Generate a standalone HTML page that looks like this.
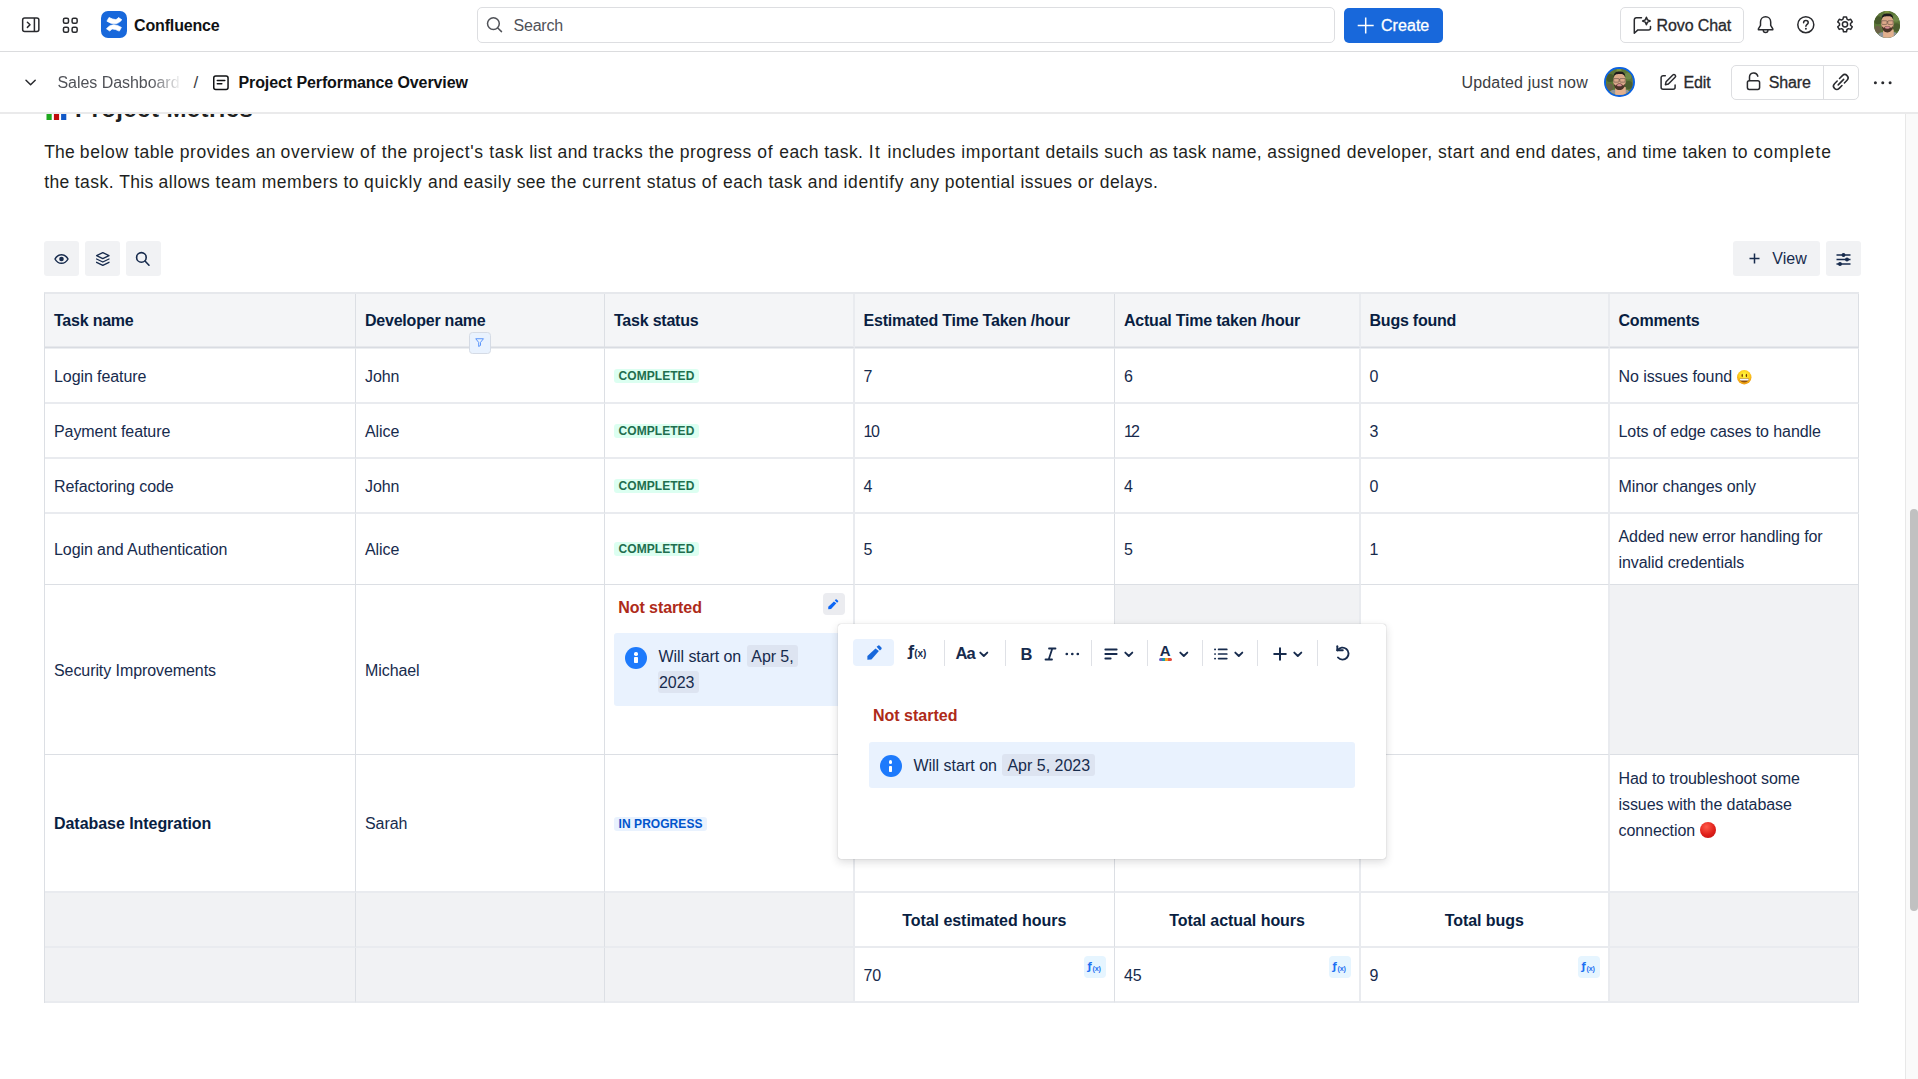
<!DOCTYPE html>
<html lang="en">
<head>
<meta charset="utf-8">
<title>Project Performance Overview - Confluence</title>
<style>
*{box-sizing:border-box;margin:0;padding:0}
html,body{width:1918px;height:1079px;overflow:hidden;background:#fff}
body{font-family:"Liberation Sans",sans-serif;color:#172b4d;font-size:16px;position:relative}
.abs{position:absolute}
svg{display:block;overflow:visible}
/* ---------- top nav ---------- */
.nav{position:absolute;left:0;top:0;width:1918px;height:52px;border-bottom:1px solid #dbdcde;background:#fff;z-index:30}
.nav .ico{position:absolute;color:#292a2e}
.logo{position:absolute;left:101px;top:11.3px;width:26.3px;height:26.6px;border-radius:7px;background:#1868db}
.brand{position:absolute;left:134px;top:13px;line-height:26px;font-size:16px;font-weight:700;color:#101214;letter-spacing:-.15px}
.search{position:absolute;left:477px;top:7.4px;width:858px;height:35.2px;border:1px solid #dddee1;border-radius:5px;background:#fff}
.search span{position:absolute;left:35.5px;top:4.6px;line-height:26px;font-size:16px;color:#505258;letter-spacing:-.2px}
.create{position:absolute;left:1343.5px;top:7.5px;width:99.5px;height:35px;border-radius:5px;background:#1868db;color:#fff}
.create span{-webkit-text-stroke:.3px #fff;position:absolute;left:37.5px;top:5.5px;line-height:26px;font-size:16px;letter-spacing:.05px}
.rovo{position:absolute;left:1620px;top:7.2px;width:124px;height:35.4px;border:1px solid #dddee1;border-radius:5px;background:#fff;color:#292a2e}
.rovo span{-webkit-text-stroke:.3px #292a2e;position:absolute;left:35.5px;top:4.8px;line-height:26px;font-size:16px;letter-spacing:-.1px}
.avatar{position:absolute;border-radius:50%;overflow:hidden;background:#6d7a4a}
/* ---------- breadcrumb bar ---------- */
.crumbs{position:absolute;left:0;top:52px;width:1918px;height:62px;border-bottom:2px solid #eaeaeb;background:#fff;z-index:20}
.crumbs .t{position:absolute;top:18px;line-height:26px;font-size:16px;white-space:nowrap}
.sharegrp{position:absolute;left:1731px;top:12.5px;width:128px;height:35.2px;border:1px solid #dddee1;border-radius:5px}
.sharegrp i{position:absolute;left:91px;top:0;width:1px;height:100%;background:#dddee1}
/* ---------- content ---------- */
.content{position:absolute;left:0;top:113px;width:1905px;height:966px;overflow:hidden;z-index:1}
h2{position:absolute;left:75px;top:-18.5px;font-size:24px;line-height:28px;font-weight:700;color:#1e1f21;white-space:nowrap;letter-spacing:.42px}
.intro{position:absolute;left:44.3px;top:23.6px;font-size:17.5px;line-height:30px;color:#1e1f21;white-space:nowrap}
.w{display:inline-block;white-space:pre;vertical-align:baseline}
.tb{position:absolute;top:128px;height:35px;border-radius:3px;background:#f1f2f4;color:#172b4d}
/* ---------- table ---------- */
.grid{position:absolute;left:44px;top:179px;width:1815px;border-left:1px solid #dcdfe4;border-top:2px solid #e6e8ec;display:grid;
 grid-template-columns:311px 249px 250px 260px 246px 249px 249px;
 grid-template-rows:54px 56px 55px 55px 71px 170px 138px 55px 55px}
.c{position:relative;border-right:1px solid #dcdfe4;border-bottom:1px solid #dcdfe4;padding:2.4px 9px 0;letter-spacing:-.08px;display:flex;align-items:center;line-height:26px;font-size:16px;white-space:nowrap;color:#172b4d}
.c:nth-child(7n+3),.c:nth-child(7n+5),.c:nth-child(7n+6){border-right:2px solid #e9ebef}
.c:nth-child(7n+4),.c:nth-child(7n+6),.c:nth-child(7n){padding-left:8.5px}
.c:nth-child(n+8):nth-child(-n+28),.c:nth-child(n+43){border-bottom:2px solid #e9ebef}
.c:nth-child(n+8):nth-child(-n+14){border-top:1px solid #eceef1}
.c:nth-child(n+8):nth-child(-n+28),.c:nth-child(n+50){padding-top:3.4px}
.h{background:#f4f5f7;font-weight:700;color:#091e42;border-bottom:1px solid #d9dce2;box-shadow:inset 0 -1px 0 #e6e8ec;padding-top:1px;letter-spacing:-.22px}
.g{background:#f1f2f4}
.b{font-weight:700;color:#091e42;letter-spacing:-.05px}
.ctr{justify-content:center}
.loz{display:inline-block;position:relative;top:-.4px;height:13.5px;line-height:15.3px;padding:0 4.6px;border-radius:3px;font-size:12px;font-weight:700;letter-spacing:.05px}
.loz.ok{background:#dcfff1;color:#216e4e;top:-1.4px}
.loz.prog{background:#e9f2fe;color:#0055cc}
.fx{position:absolute;right:8.4px;top:8.4px;width:22px;height:22px;border-radius:4px;background:#e6f5ff;color:#1d6ff2;letter-spacing:0}
.panel{position:absolute;background:#e9f2fe;border-radius:3px}
.chip{background:#dde4f1;border-radius:3px;padding:2.5px 4.5px}
.info{position:absolute;width:22px;height:22px;border-radius:50%;background:#1d7afc}
.info:before{content:"";position:absolute;left:9.25px;top:5.1px;width:3.5px;height:3.5px;border-radius:50%;background:#fff}
.info:after{content:"";position:absolute;left:9.3px;top:10.2px;width:3.4px;height:6.2px;border-radius:.8px;background:#fff}
.red{color:#ae2a19;font-weight:700}
/* ---------- popup ---------- */
.popup{position:absolute;left:837.5px;top:623.5px;width:548.5px;height:235.5px;background:#fff;border-radius:3px;box-shadow:0 0 1px rgba(30,31,40,.42),0 3px 9px rgba(30,31,40,.16);z-index:10}
.popup .sep{position:absolute;top:16.5px;width:1px;height:26px;background:#dfe1e6}
.popup .i{position:absolute;color:#172b4d}
/* ---------- scrollbar ---------- */
.sbar{position:absolute;left:1905px;top:113px;width:13px;height:966px;background:#fafafa;border-left:1px solid #e8e8e8;z-index:5}
.sbar i{position:absolute;left:3.5px;top:396px;width:8px;height:402px;border-radius:4px;background:#c1c1c1}
</style>
</head>
<body>
<header class="nav">
  <svg class="ico" style="left:21px;top:16px" width="20" height="18" viewBox="0 0 20 18" fill="none" stroke="currentColor" stroke-width="1.5" stroke-linejoin="round"><rect x="1.65" y="2" width="16.2" height="13.6" rx="2"/><path d="M13.400 2v13.600"/><path d="M6.4 6.2L9 8.8l-2.6 2.6" stroke-linecap="round"/></svg>
  <svg class="ico" style="left:62px;top:16.5px" width="17" height="17" viewBox="0 0 17 17" fill="none" stroke="currentColor" stroke-width="1.5"><rect x="1.450" y="1.220" width="5.050" height="5.050" rx="1.500"/><rect x="10.100" y="1.220" width="5.050" height="5.050" rx="1.500"/><rect x="1.450" y="10.190" width="5.050" height="5.050" rx="1.500"/><rect x="10.100" y="10.190" width="5.050" height="5.050" rx="1.500"/></svg>
  <div class="logo"><svg width="26.3" height="26.6" viewBox="0 0 26.3 26.6" fill="#fff" stroke="#fff" stroke-width=".7" stroke-linejoin="round"><path d="M8 6.5L5.9 10.2Q10 13 14 12.85Q18 12.5 20.85 8.8L17.5 6.5Q16 8.5 14.7 8.6Q12 8.5 8 6.5Z"/><path d="M18.3 20.1L20.4 16.4Q16.3 13.6 12.3 13.75Q8.3 14.1 5.45 17.8L8.8 20.1Q10.3 18.1 11.6 18Q14.3 18.1 18.3 20.1Z"/></svg></div>
  <div class="brand">Confluence</div>
  <div class="search">
    <svg class="ico" style="left:8.300px;top:7.400px;color:#505258" width="18" height="18" viewBox="0 0 18 18" fill="none" stroke="currentColor" stroke-width="1.5" stroke-linecap="round"><circle cx="7.4" cy="7.6" r="5.9"/><path d="M11.8 12l3.7 3.6"/></svg>
    <span>Search</span>
  </div>
  <div class="create">
    <svg class="abs" style="left:13.5px;top:9px" width="17" height="17" viewBox="0 0 17 17" fill="none" stroke="#fff" stroke-width="1.5"><path d="M8.7 .6v16M.7 8.6h16"/></svg>
    <span>Create</span>
  </div>
  <div class="rovo">
    <svg class="abs" style="left:11.500px;top:7.800px" width="20" height="19" viewBox="0 0 20 19" fill="none" stroke="currentColor" stroke-width="1.5" stroke-linejoin="round" stroke-linecap="round"><path d="M8.500 1.800H3.300a2 2 0 0 0-2 2v13.400l3.600-3.300h10.600a2 2 0 0 0 2-2V10.500"/><path d="M13.400 1.200l1.100 2.700 2.700 1.100-2.700 1.100-1.100 2.700-1.100-2.700-2.700-1.100 2.700-1.100z" stroke-width="1.500"/></svg>
    <span>Rovo Chat</span>
  </div>
  <svg class="ico" style="left:1756px;top:15px" width="19" height="20" viewBox="0 0 19 20" fill="none" stroke="currentColor" stroke-width="1.5" stroke-linejoin="round" stroke-linecap="round"><path d="M9.6 1.7c-3 0-5.1 2.3-5.1 5.2v3.5L2.4 13.8v.9h14.4v-.9l-2.1-3.4V6.900c0-2.9-2.100-5.200-5.100-5.200z"/><path d="M7.3 15.200c0 1.300 1 2.300 2.300 2.300s2.300-1 2.300-2.300"/></svg>
  <svg class="ico" style="left:1796px;top:15px" width="20" height="20" viewBox="0 0 20 20" fill="none" stroke="currentColor" stroke-width="1.5" stroke-linecap="round"><circle cx="9.800" cy="9.700" r="8"/><path d="M7.600 7.800c0-1.300 1-2.200 2.300-2.200s2.300.9 2.300 2.100c0 1.600-2.300 1.800-2.300 3.500"/><circle cx="9.900" cy="13.800" r=".95" fill="currentColor" stroke="none"/></svg>
  <svg class="ico" style="left:1835px;top:14.900px" width="20" height="20.400" viewBox="0 0 20 20" fill="none" stroke="currentColor" stroke-width="1.500" stroke-linejoin="round"><path d="M8.500 1.700h3l.5 2.300 1.500.85 2.250-.75 1.500 2.600-1.750 1.600v1.700l1.750 1.600-1.500 2.600-2.250-.75-1.500.85-.5 2.300h-3l-.5-2.300-1.500-.85-2.250.75-1.500-2.600 1.750-1.600V8.300L2.750 6.700l1.500-2.600 2.250.75L8 4z"/><circle cx="10" cy="9.150" r="2.600"/></svg>
  <div class="avatar" style="left:1874px;top:11.300px;width:26px;height:26.700px">
    <svg width="26" height="26.700" viewBox="0 0 26 26" preserveAspectRatio="none"><rect width="26" height="26" fill="#5c7638"/><circle cx="4" cy="9" r="4" fill="#46592b"/><circle cx="22" cy="7" r="3.500" fill="#6f8a48"/><circle cx="22.500" cy="16" r="4" fill="#4b5e2e"/><circle cx="3.500" cy="18" r="3.500" fill="#6b6048"/><circle cx="13" cy="1.500" r="2.500" fill="#7d9340"/><path d="M2 26C3 21.500 7 20.500 9.100 20.700H19.700C22 20.500 24 22 24.500 26Z" fill="#8f959d"/><rect x="9.100" y="18" width="10.600" height="8" fill="#e2b08e"/><ellipse cx="13.400" cy="12" rx="6.300" ry="8.300" fill="#dca98a"/><path d="M7.500 8.300C7.500 3.500 10 2.400 13.400 2.400S19.300 3.500 19.300 8.300C18.500 5.600 17 5 13.400 5S8.300 5.600 7.500 8.300Z" fill="#1d1a1c"/><path d="M7.500 14C8 19 10.500 21 13.400 21S18.800 19 19.300 14C18.200 16.600 16.500 17 16.200 15.500C15 14.200 11.800 14.200 10.600 15.500C10.300 17 8.600 16.600 7.500 14Z" fill="#4b3327"/><ellipse cx="13.400" cy="16.100" rx="2.500" ry="1.200" fill="#d78f93"/><path d="M7.700 9.500h4.600a.7.700 0 0 1 .7.700v2a.9.900 0 0 1-.9.900H8.600a.9.900 0 0 1-.9-.9zM13.800 10.200a.7.700 0 0 1 .7-.7h4.600v2.700a.9.900 0 0 1-.9.900h-3.500a.9.900 0 0 1-.9-.9zM13 10.400h.8" fill="none" stroke="#5b4a42" stroke-width=".55"/></svg>
  </div>
</header>

<div class="crumbs">
  <svg class="abs" style="left:24px;top:26px;color:#292a2e" width="14" height="10" viewBox="0 0 14 10" fill="none" stroke="currentColor" stroke-width="1.500" stroke-linecap="round" stroke-linejoin="round"><path d="M2 2.200l4.600 4.600 4.600-4.600"/></svg>
  <div class="t" style="left:57.500px;color:#505258;letter-spacing:-.05px;-webkit-mask-image:linear-gradient(90deg,#000 0,#000 92px,transparent 124px);mask-image:linear-gradient(90deg,#000 0,#000 92px,transparent 124px)">Sales Dashboard</div>
  <div class="t" style="left:193.500px;color:#3b3d42;font-size:17px">/</div>
  <svg class="abs" style="left:212px;top:21.500px;color:#101214" width="18" height="18" viewBox="0 0 18 18" fill="none" stroke="currentColor" stroke-width="1.500" stroke-linecap="round" stroke-linejoin="round"><rect x="1.750" y="2" width="14.300" height="13.500" rx="2"/><path d="M5.300 6.600h7.500M5.300 9.700h4.500"/></svg>
  <div class="t" style="left:238.500px;font-weight:700;color:#101214;letter-spacing:-.1px">Project Performance Overview</div>
  <div class="t" style="left:1461.500px;color:#3b3d42;letter-spacing:.17px">Updated just now</div>
  <div class="avatar" style="left:1604.400px;top:14.700px;width:30.700px;height:30.700px;border:2.400px solid #0c62e0">
    <svg width="26.100" height="26.100" viewBox="0 0 26 26"><rect width="26" height="26" fill="#5c7638"/><circle cx="4" cy="9" r="4" fill="#46592b"/><circle cx="22" cy="7" r="3.500" fill="#6f8a48"/><circle cx="22.500" cy="16" r="4" fill="#4b5e2e"/><circle cx="3.500" cy="18" r="3.500" fill="#6b6048"/><circle cx="13" cy="1.500" r="2.500" fill="#7d9340"/><path d="M2 26C3 21.500 7 20.500 9.100 20.700H19.700C22 20.500 24 22 24.500 26Z" fill="#8f959d"/><rect x="9.100" y="18" width="10.600" height="8" fill="#e2b08e"/><ellipse cx="13.400" cy="12" rx="6.300" ry="8.300" fill="#dca98a"/><path d="M7.500 8.300C7.500 3.500 10 2.400 13.400 2.400S19.300 3.500 19.300 8.300C18.500 5.600 17 5 13.400 5S8.300 5.600 7.500 8.300Z" fill="#1d1a1c"/><path d="M7.500 14C8 19 10.500 21 13.400 21S18.800 19 19.300 14C18.200 16.600 16.500 17 16.200 15.500C15 14.200 11.800 14.200 10.600 15.500C10.300 17 8.600 16.600 7.500 14Z" fill="#4b3327"/><ellipse cx="13.400" cy="16.100" rx="2.500" ry="1.200" fill="#d78f93"/><path d="M7.700 9.500h4.600a.7.700 0 0 1 .7.700v2a.9.900 0 0 1-.9.900H8.600a.9.900 0 0 1-.9-.9zM13.800 10.200a.7.700 0 0 1 .7-.7h4.600v2.700a.9.900 0 0 1-.9.900h-3.500a.9.900 0 0 1-.9-.9zM13 10.400h.8" fill="none" stroke="#5b4a42" stroke-width=".55"/></svg>
  </div>
  <svg class="abs" style="left:1659px;top:21px;color:#292a2e" width="18" height="18" viewBox="0 0 18 18" fill="none" stroke="currentColor" stroke-width="1.500" stroke-linecap="round" stroke-linejoin="round"><path d="M6.300 2.750H4.100a2 2 0 0 0-2 2v9.500a2 2 0 0 0 2 2h10a2 2 0 0 0 2-2V12"/><path d="M6.400 11.700l.7-3 6.700-6.700a1.600 1.600 0 0 1 2.300 2.300l-6.700 6.700z"/></svg>
  <div class="t" style="left:1683.500px;color:#292a2e;letter-spacing:-.1px;-webkit-text-stroke:.3px #292a2e">Edit</div>
  <div class="sharegrp"><i></i>
    <svg class="abs" style="left:13px;top:5.800px;color:#292a2e" width="17" height="21" viewBox="0 0 17 21" fill="none" stroke="currentColor" stroke-width="1.500" stroke-linecap="round" stroke-linejoin="round"><rect x="2.400" y="9.800" width="12.200" height="8.600" rx="1.800"/><path d="M4.500 9.600V6.100a4.200 4.200 0 0 1 8.300-.9"/></svg>
    <div class="t" style="left:36.700px;top:4.500px;color:#292a2e;letter-spacing:-.15px;-webkit-text-stroke:.3px #292a2e">Share</div>
    
  </div>
  <svg class="abs" style="left:1826px;top:16px;color:#292a2e" width="30" height="28" viewBox="1826 68 30 28" fill="none" stroke="currentColor" stroke-width="1.550" stroke-linecap="round"><path d="M1839.500 78.500L1842.400 75.600A3.300 3.300 0 0 1 1847.070 80.270L1844.400 82.970"/><path d="M1837.200 81L1834.500 83.700A3.300 3.300 0 0 0 1839.170 88.370L1841.970 85.570"/><path d="M1838.200 84.900L1843.650 79.400"/></svg>
  <svg class="abs" style="left:1872px;top:28px;color:#292a2e" width="22" height="6" viewBox="0 0 22 6" fill="currentColor"><circle cx="3.400" cy="2.700" r="1.500"/><circle cx="10.750" cy="2.700" r="1.500"/><circle cx="18.100" cy="2.700" r="1.500"/></svg>
</div>
<main class="content">
  <svg class="abs" style="left:46px;top:-12px" width="21" height="19" viewBox="0 0 21 19"><rect x=".5" y="6" width="5.200" height="13" fill="#1fa81f"/><rect x="7.900" y="1" width="5.200" height="18" fill="#c00a0a"/><rect x="15.100" y="9" width="5.200" height="10" fill="#1158c7"/></svg>
  <h2>Project Metrics</h2>
  <p class="intro"><span class="w" style="width:35.50px;letter-spacing:0.121px">The </span><span class="w" style="width:54.50px;letter-spacing:0.651px">below </span><span class="w" style="width:45.50px;letter-spacing:0.448px">table </span><span class="w" style="width:76.00px;letter-spacing:0.554px">provides </span><span class="w" style="width:24.80px;letter-spacing:0.157px">an </span><span class="w" style="width:79.50px;letter-spacing:0.620px">overview </span><span class="w" style="width:21.70px;letter-spacing:0.744px">of </span><span class="w" style="width:31.30px;letter-spacing:0.528px">the </span><span class="w" style="width:76.20px;letter-spacing:0.672px">project&#39;s </span><span class="w" style="width:40.00px;letter-spacing:0.606px">task </span><span class="w" style="width:28.30px;letter-spacing:0.410px">list </span><span class="w" style="width:35.50px;letter-spacing:0.359px">and </span><span class="w" style="width:55.70px;letter-spacing:0.593px">tracks </span><span class="w" style="width:31.00px;letter-spacing:0.453px">the </span><span class="w" style="width:77.50px;letter-spacing:0.505px">progress </span><span class="w" style="width:22.00px;letter-spacing:0.844px">of </span><span class="w" style="width:45.00px;letter-spacing:0.438px">each </span><span class="w" style="width:44.50px;letter-spacing:0.445px">task. </span><span class="w" style="width:18.80px;letter-spacing:1.402px">It </span><span class="w" style="width:73.70px;letter-spacing:0.514px">includes </span><span class="w" style="width:84.30px;letter-spacing:0.649px">important </span><span class="w" style="width:58.70px;letter-spacing:0.406px">details </span><span class="w" style="width:45.00px;letter-spacing:0.634px">such </span><span class="w" style="width:23.80px;letter-spacing:0.152px">as </span><span class="w" style="width:38.70px;letter-spacing:0.346px">task </span><span class="w" style="width:55.50px;letter-spacing:0.333px">name, </span><span class="w" style="width:79.50px;letter-spacing:0.509px">assigned </span><span class="w" style="width:91.30px;letter-spacing:0.516px">developer, </span><span class="w" style="width:42.00px;letter-spacing:0.516px">start </span><span class="w" style="width:35.50px;letter-spacing:0.359px">and </span><span class="w" style="width:35.50px;letter-spacing:0.359px">end </span><span class="w" style="width:55.70px;letter-spacing:0.450px">dates, </span><span class="w" style="width:35.80px;letter-spacing:0.434px">and </span><span class="w" style="width:40.00px;letter-spacing:0.416px">time </span><span class="w" style="width:50.00px;letter-spacing:0.388px">taken </span><span class="w" style="width:21.00px;letter-spacing:0.510px">to </span><span class="w" style="width:80.40px;letter-spacing:0.923px">complete</span><br><span class="w" style="width:30.50px;letter-spacing:0.328px">the </span><span class="w" style="width:44.50px;letter-spacing:0.445px">task. </span><span class="w" style="width:39.30px;letter-spacing:0.276px">This </span><span class="w" style="width:57.00px;letter-spacing:0.500px">allows </span><span class="w" style="width:46.20px;letter-spacing:0.487px">team </span><span class="w" style="width:81.80px;letter-spacing:0.500px">members </span><span class="w" style="width:20.50px;letter-spacing:0.344px">to </span><span class="w" style="width:64.00px;letter-spacing:0.705px">quickly </span><span class="w" style="width:35.50px;letter-spacing:0.359px">and </span><span class="w" style="width:53.20px;letter-spacing:0.513px">easily </span><span class="w" style="width:34.30px;letter-spacing:0.305px">see </span><span class="w" style="width:31.20px;letter-spacing:0.503px">the </span><span class="w" style="width:64.50px;letter-spacing:0.646px">current </span><span class="w" style="width:55.00px;letter-spacing:0.491px">status </span><span class="w" style="width:21.30px;letter-spacing:0.610px">of </span><span class="w" style="width:45.50px;letter-spacing:0.537px">each </span><span class="w" style="width:39.20px;letter-spacing:0.446px">task </span><span class="w" style="width:35.80px;letter-spacing:0.434px">and </span><span class="w" style="width:66.20px;letter-spacing:0.654px">identify </span><span class="w" style="width:35.00px;letter-spacing:0.480px">any </span><span class="w" style="width:75.80px;letter-spacing:0.477px">potential </span><span class="w" style="width:57.20px;letter-spacing:0.390px">issues </span><span class="w" style="width:22.00px;letter-spacing:0.526px">or </span><span class="w" style="width:60.70px;letter-spacing:0.464px">delays.</span></p>

  <div class="tb" style="left:44px;width:35px"><svg class="abs" style="left:10px;top:11.500px" width="15" height="12" viewBox="0 0 15 12" fill="none" stroke="currentColor" stroke-width="1.500"><path d="M1 6c1.600-2.900 3.800-4.300 6.500-4.300S12.400 3.100 14 6c-1.600 2.900-3.800 4.300-6.500 4.300S2.600 8.900 1 6z" stroke-linejoin="round"/><circle cx="7.500" cy="6" r="2.300" fill="currentColor" stroke="none"/></svg></div>
  <div class="tb" style="left:84.700px;width:35.300px"><svg class="abs" style="left:10px;top:10px" width="16" height="16" viewBox="0 0 16 16" fill="none" stroke="currentColor" stroke-width="1.300" stroke-linejoin="round" stroke-linecap="round"><path d="M7.800 1.600l6.200 3-6.200 3-6.200-3z"/><path d="M1.600 8l6.200 3 6.200-3"/><path d="M1.600 11.300l6.200 3 6.200-3"/></svg></div>
  <div class="tb" style="left:125.500px;width:35px"><svg class="abs" style="left:9.500px;top:10px" width="16" height="16" viewBox="0 0 16 16" fill="none" stroke="currentColor" stroke-width="1.600" stroke-linecap="round"><circle cx="6.400" cy="6.400" r="4.800"/><path d="M10 10l4 4.200"/></svg></div>
  <div class="tb" style="left:1732.700px;width:87.600px"><svg class="abs" style="left:16px;top:12px" width="11" height="11" viewBox="0 0 11 11" fill="none" stroke="currentColor" stroke-width="1.500"><path d="M5.500 .5v10M.5 5.500h10"/></svg><span class="abs" style="left:39.500px;top:5px;line-height:26px;font-size:16px;letter-spacing:.1px">View</span></div>
  <div class="tb" style="left:1826px;width:35px"><svg class="abs" style="left:10px;top:11.500px" width="15" height="13" viewBox="0 0 15 13" fill="none" stroke="currentColor" stroke-width="1.300"><path d="M.500 2h14M.500 6.500h14M.500 11h14"/><circle cx="7.500" cy="2" r="1.300" fill="currentColor"/><circle cx="11" cy="6.500" r="1.300" fill="currentColor"/><circle cx="4" cy="11" r="1.300" fill="currentColor"/></svg></div>

  <div class="grid">
    <div class="c h">Task name</div>
    <div class="c h">Developer name<div class="abs" style="left:112.700px;top:37.600px;width:22px;height:22px;border:1px solid #d5dbe5;border-radius:3.500px;background:#e9f2fe;z-index:3"><svg class="abs" style="left:5.400px;top:5.600px" width="9.200" height="9.200" viewBox="0 0 10 10" fill="none" stroke="#4c8dfb" stroke-width="1" stroke-linejoin="round"><path d="M.800 .800h8.400L6 4.800v3.300L4 9.200V4.800z"/></svg></div></div>
    <div class="c h">Task status</div>
    <div class="c h">Estimated Time Taken /hour</div>
    <div class="c h">Actual Time taken /hour</div>
    <div class="c h">Bugs found</div>
    <div class="c h">Comments</div>

    <div class="c">Login feature</div><div class="c">John</div><div class="c"><span class="loz ok">COMPLETED</span></div><div class="c">7</div><div class="c">6</div><div class="c">0</div>
    <div class="c">No issues found<svg class="abs" style="left:126.600px;top:20.700px" width="14.500" height="14.500" viewBox="-7.250 -7.250 14.500 14.500"><defs><radialGradient id="sm" cx=".5" cy=".38" r=".62"><stop offset="0" stop-color="#ffff48"/><stop offset=".55" stop-color="#ffd520"/><stop offset="1" stop-color="#ee9410"/></radialGradient></defs><circle r="7.200" fill="url(#sm)"/><ellipse cx="-2.050" cy="-1.700" rx=".7" ry="1.750" fill="#7a3a00"/><ellipse cx="2.150" cy="-1.700" rx=".7" ry="1.750" fill="#7a3a00"/><path d="M-4.700 1.200H4.700Q4.200 5 0 5.300Q-4.200 5-4.700 1.200Z" fill="#93500a"/><path d="M-4.500 1.400H4.500Q4.300 2.700 3.700 3.300H-3.700Q-4.300 2.700-4.500 1.400Z" fill="#f4f6ff"/></svg></div>

    <div class="c">Payment feature</div><div class="c">Alice</div><div class="c"><span class="loz ok">COMPLETED</span></div><div class="c" style="letter-spacing:-1.300px">10</div><div class="c" style="letter-spacing:-1.800px">12</div><div class="c">3</div><div class="c">Lots of edge cases to handle</div>

    <div class="c">Refactoring code</div><div class="c">John</div><div class="c"><span class="loz ok">COMPLETED</span></div><div class="c">4</div><div class="c">4</div><div class="c">0</div><div class="c">Minor changes only</div>

    <div class="c">Login and Authentication</div><div class="c">Alice</div><div class="c"><span class="loz ok">COMPLETED</span></div><div class="c">5</div><div class="c">5</div><div class="c">1</div><div class="c">Added new error handling for<br>invalid credentials</div>

    <div class="c">Security Improvements</div><div class="c">Michael</div>
    <div class="c">
      <span class="abs red" style="left:13.300px;top:10px">Not started</span>
      <div class="abs" style="left:217.600px;top:8.400px;width:22px;height:22px;border-radius:4px;background:#ebecf0"><svg class="abs" style="left:5.400px;top:5.400px" width="11.200" height="11.200" viewBox="0 0 16 16" fill="#0c66f5"><path d="M.4 11.100L8.500 3.400l3.400 2.700L4.400 14.400l-4 .25z"/><path d="M9.600 1.700L11.300.500a.9.900 0 0 1 1.100.05l2 1.900a.8.800 0 0 1 .2.600v.900L12.900 5.500z"/></svg></div>
      <div class="panel" style="left:9px;top:48px;width:231px;height:73px"></div>
      <div class="info" style="left:20.100px;top:62px"></div>
      <div class="abs" style="left:53.600px;top:58.500px;line-height:26px">Will start on <span class="chip" style="margin-left:1px;padding-left:4.800px;padding-right:4.800px">Apr 5,</span><br><span class="chip" style="margin-left:-.6px;padding-left:1px;padding-right:5px">2023</span></div>
    </div>
    <div class="c"></div><div class="c g"></div><div class="c"></div><div class="c g"></div>

    <div class="c b">Database Integration</div><div class="c">Sarah</div><div class="c"><span class="loz prog">IN PROGRESS</span></div><div class="c"></div><div class="c"></div><div class="c"></div>
    <div class="c" style="align-items:flex-start;padding-top:10.500px"><div>Had to troubleshoot some<br>issues with the database<br>connection&nbsp;<i style="display:inline-block;width:16px;height:16px;border-radius:50%;vertical-align:-2.500px;margin-left:.500px;background:radial-gradient(circle at 40% 30%,#ff5a4a 0,#e0201a 55%,#b50f0f 100%)"></i></div></div>

    <div class="c g"></div><div class="c g"></div><div class="c g"></div><div class="c b ctr">Total estimated hours</div><div class="c b ctr">Total actual hours</div><div class="c b ctr">Total bugs</div><div class="c g"></div>

    <div class="c g"></div><div class="c g"></div><div class="c g"></div>
    <div class="c">70<div class="fx"><span class="abs" style="left:4px;top:3.300px;font-family:'DejaVu Sans',sans-serif;font-size:9.800px;line-height:14px;font-weight:700">ƒ</span><span class="abs" style="left:8.800px;top:6.300px;font-size:7.200px;line-height:12px;font-weight:700;letter-spacing:-.1px">(x)</span></div></div>
    <div class="c">45<div class="fx"><span class="abs" style="left:4px;top:3.300px;font-family:'DejaVu Sans',sans-serif;font-size:9.800px;line-height:14px;font-weight:700">ƒ</span><span class="abs" style="left:8.800px;top:6.300px;font-size:7.200px;line-height:12px;font-weight:700;letter-spacing:-.1px">(x)</span></div></div>
    <div class="c">9<div class="fx"><span class="abs" style="left:4px;top:3.300px;font-family:'DejaVu Sans',sans-serif;font-size:9.800px;line-height:14px;font-weight:700">ƒ</span><span class="abs" style="left:8.800px;top:6.300px;font-size:7.200px;line-height:12px;font-weight:700;letter-spacing:-.1px">(x)</span></div></div>
    <div class="c g"></div>
  </div>
</main>
<div class="popup">
  <div class="abs" style="left:15.800px;top:15.600px;width:41px;height:27px;border-radius:4px;background:#e9f2fe"><svg class="abs" style="left:13.900px;top:6px" width="16" height="16" viewBox="0 0 16 16" fill="#1868db"><path d="M.4 11.100L8.500 3.400l3.400 2.700L4.400 14.400l-4 .25z"/><path d="M9.600 1.700L11.300.500a.9.900 0 0 1 1.100.05l2 1.900a.8.800 0 0 1 .2.600v.900L12.900 5.500z"/></svg></div>
  <span class="i" style="left:70.800px;top:17.500px;font-family:'DejaVu Sans',sans-serif;font-size:13.500px;line-height:20px;font-weight:700">ƒ</span><span class="i" style="left:76.800px;top:22.600px;font-size:10px;line-height:16px;font-weight:700;letter-spacing:-.15px">(x)</span>
  <i class="sep" style="left:106px"></i>
  <span class="i" style="left:118px;top:17.300px;font-size:16.500px;line-height:24px;font-weight:700;letter-spacing:-.9px">Aa</span>
  <svg class="i" style="left:141px;top:27px" width="10" height="7" viewBox="0 0 10 7" fill="none" stroke="currentColor" stroke-width="1.900" stroke-linecap="round" stroke-linejoin="round"><path d="M1.300 1.600l3.500 3.400 3.500-3.400"/></svg>
  <i class="sep" style="left:167.700px"></i>
  <span class="i" style="left:183px;top:17.500px;font-size:16.500px;line-height:26px;font-weight:700">B</span>
  <svg class="i" style="left:206px;top:23.500px" width="13" height="14" viewBox="0 0 13 14" fill="none" stroke="currentColor" stroke-width="1.800" stroke-linecap="round"><path d="M5 1.500h6.500M1.500 12.500h6.500M8.300 1.500L4.700 12.500"/></svg>
  <svg class="i" style="left:227px;top:28.500px" width="15" height="4" viewBox="0 0 15 4" fill="currentColor"><circle cx="1.800" cy="2" r="1.350"/><circle cx="7.300" cy="2" r="1.350"/><circle cx="12.800" cy="2" r="1.350"/></svg>
  <i class="sep" style="left:253.700px"></i>
  <svg class="i" style="left:266px;top:24px" width="14" height="12" viewBox="0 0 14 12" fill="none" stroke="currentColor" stroke-width="1.800" stroke-linecap="round"><path d="M1.300 1.500h11.400M1.300 6h11.400M1.300 10.500h5.400"/></svg>
  <svg class="i" style="left:286px;top:27px" width="10" height="7" viewBox="0 0 10 7" fill="none" stroke="currentColor" stroke-width="1.900" stroke-linecap="round" stroke-linejoin="round"><path d="M1.300 1.600l3.500 3.400 3.500-3.400"/></svg>
  <i class="sep" style="left:309.600px"></i>
  <span class="i" style="left:322.300px;top:15.400px;font-size:15px;line-height:24px;font-weight:700">A</span>
  <i class="abs" style="left:321.900px;top:34.500px;width:12.600px;height:3px;border-radius:1.500px;background:linear-gradient(90deg,#6e5dc6 0,#6e5dc6 22%,#1d9aaa 22%,#1d9aaa 45%,#f5a623 45%,#f5a623 70%,#e2483d 70%)"></i>
  <svg class="i" style="left:341px;top:27px" width="10" height="7" viewBox="0 0 10 7" fill="none" stroke="currentColor" stroke-width="1.900" stroke-linecap="round" stroke-linejoin="round"><path d="M1.300 1.600l3.500 3.400 3.500-3.400"/></svg>
  <i class="sep" style="left:364.600px"></i>
  <svg class="i" style="left:376.500px;top:24px" width="14" height="12" viewBox="0 0 14 12" fill="none" stroke="currentColor" stroke-width="1.700" stroke-linecap="round"><path d="M4.600 1.400h8.200M4.600 6h8.200M4.600 10.600h8.200"/><path d="M.900 1.400h.3M.900 6h.3M.900 10.600h.3"/></svg>
  <svg class="i" style="left:396.300px;top:27px" width="10" height="7" viewBox="0 0 10 7" fill="none" stroke="currentColor" stroke-width="1.900" stroke-linecap="round" stroke-linejoin="round"><path d="M1.300 1.600l3.500 3.400 3.500-3.400"/></svg>
  <i class="sep" style="left:419.700px"></i>
  <svg class="i" style="left:435.500px;top:23.500px" width="14" height="14" viewBox="0 0 14 14" fill="none" stroke="currentColor" stroke-width="2" stroke-linecap="round"><path d="M7 1.200v11.600M1.200 7h11.600"/></svg>
  <svg class="i" style="left:455.300px;top:27px" width="10" height="7" viewBox="0 0 10 7" fill="none" stroke="currentColor" stroke-width="1.900" stroke-linecap="round" stroke-linejoin="round"><path d="M1.300 1.600l3.500 3.400 3.500-3.400"/></svg>
  <i class="sep" style="left:479.700px"></i>
  <svg class="i" style="left:497.500px;top:21.500px" width="17" height="16" viewBox="0 0 17 16" fill="none" stroke="currentColor" stroke-width="1.900" stroke-linecap="round" stroke-linejoin="round"><path d="M2.300 5.200h5.500"/><path d="M2.300 5.200V1.300"/><path d="M2.600 5.200A6 6 0 1 1 3 12.500" /></svg>
  <span class="abs red" style="left:35.500px;top:79.800px;line-height:26px">Not started</span>
  <div class="panel" style="left:31.500px;top:118px;width:485.500px;height:46.500px"></div>
  <div class="info" style="left:42px;top:131.900px"></div>
  <div class="abs" style="left:75.900px;top:129.200px;line-height:26px;white-space:nowrap">Will start on <span class="chip" style="margin-left:1px;padding-left:5px;padding-right:5px">Apr 5, 2023</span></div>
</div>
<div class="sbar"><i></i></div>
</body>
</html>
